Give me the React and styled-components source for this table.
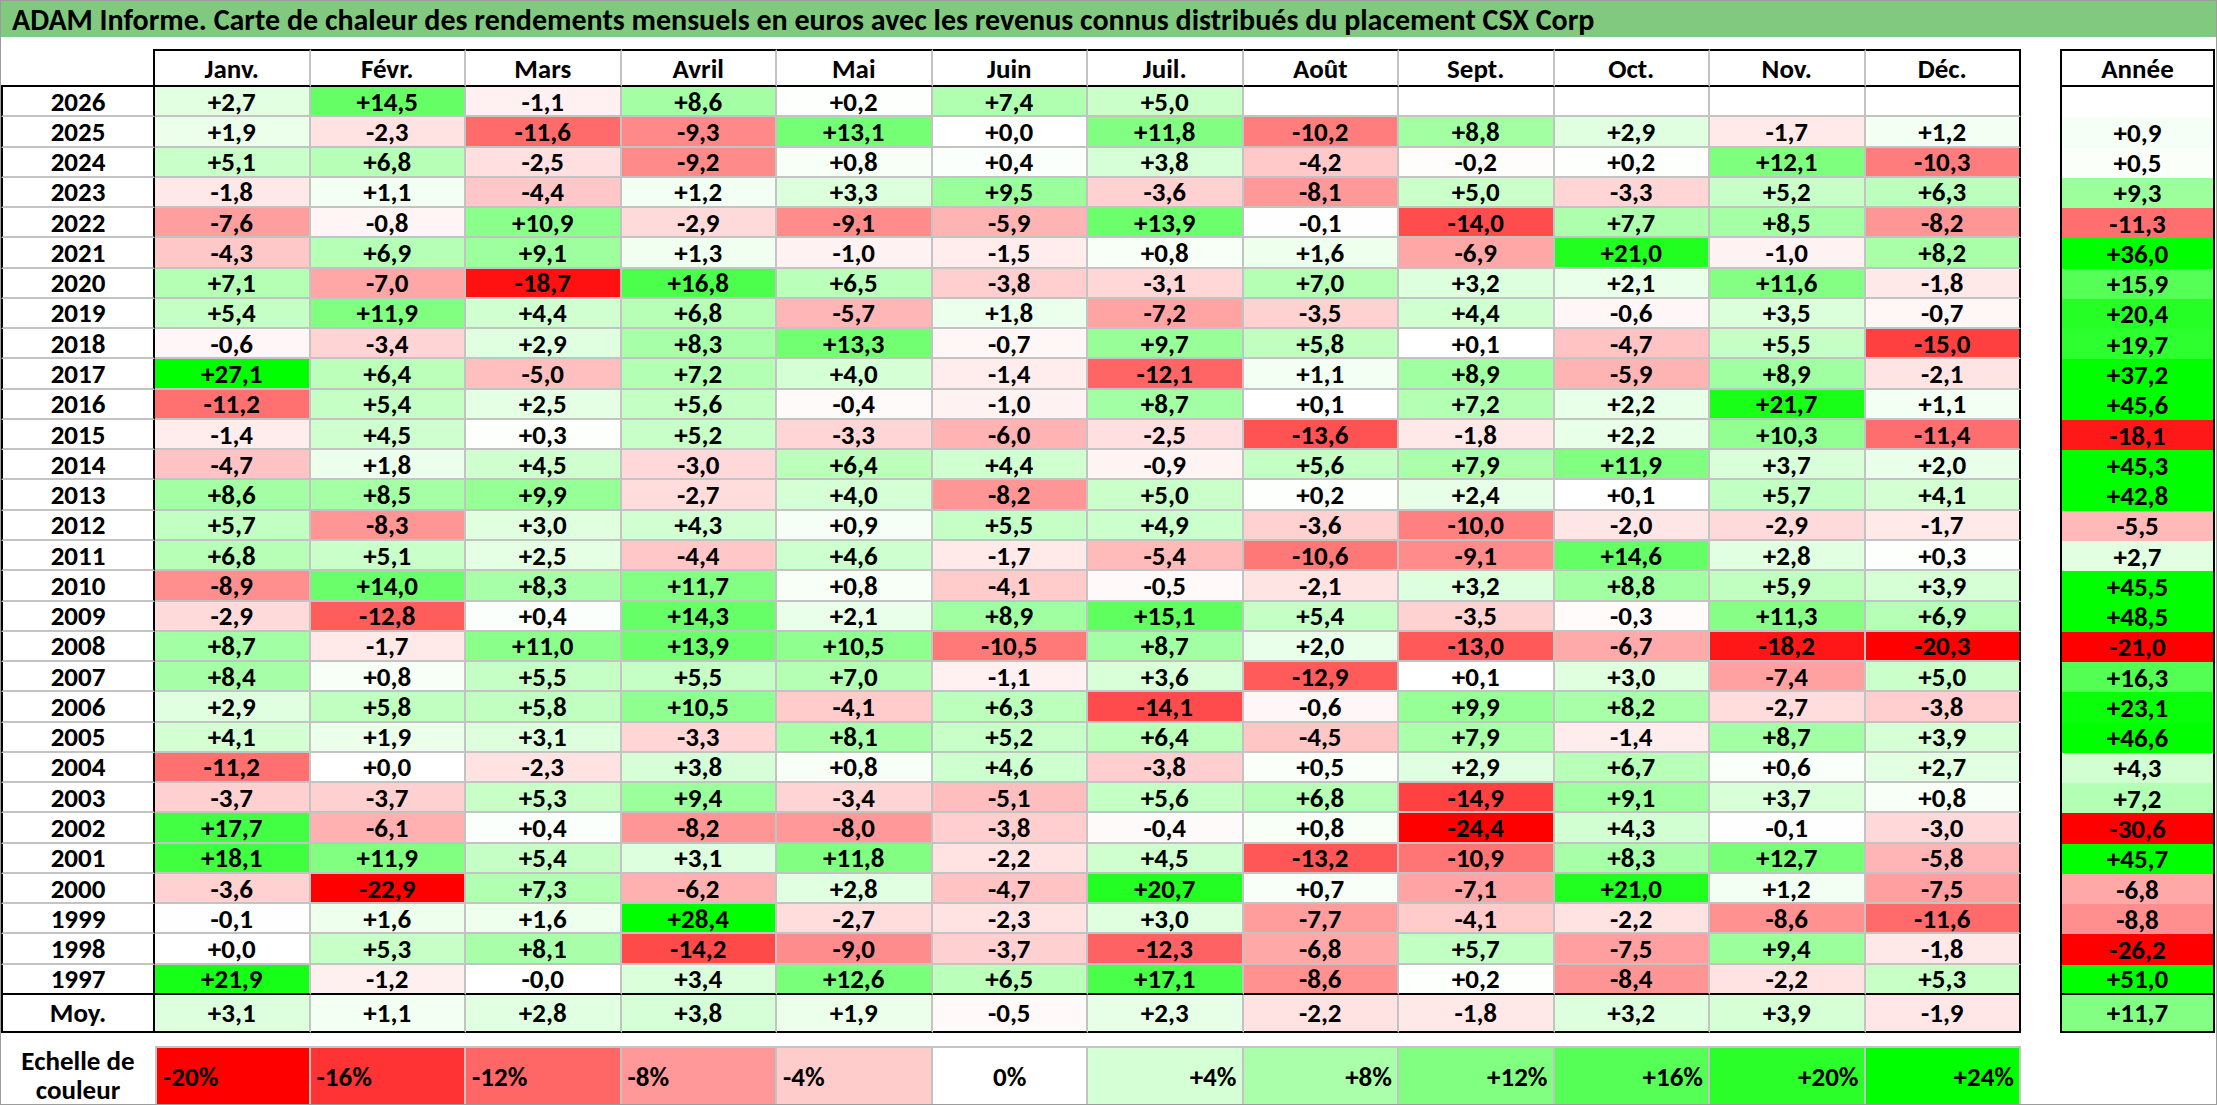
import React from "react";
import styled, { createGlobalStyle } from "styled-components";

const GRID = "#c3c3c3";
const INK = "#000000";

const MONTHS = ["Janv.", "Févr.", "Mars", "Avril", "Mai", "Juin", "Juil.", "Août", "Sept.", "Oct.", "Nov.", "Déc."];

// année | 12 mois | total de l'année
const ROWS = [
  ["2026", "+2,7 +14,5 -1,1 +8,6 +0,2 +7,4 +5,0 . . . . .", ""],
  ["2025", "+1,9 -2,3 -11,6 -9,3 +13,1 +0,0 +11,8 -10,2 +8,8 +2,9 -1,7 +1,2", "+0,9"],
  ["2024", "+5,1 +6,8 -2,5 -9,2 +0,8 +0,4 +3,8 -4,2 -0,2 +0,2 +12,1 -10,3", "+0,5"],
  ["2023", "-1,8 +1,1 -4,4 +1,2 +3,3 +9,5 -3,6 -8,1 +5,0 -3,3 +5,2 +6,3", "+9,3"],
  ["2022", "-7,6 -0,8 +10,9 -2,9 -9,1 -5,9 +13,9 -0,1 -14,0 +7,7 +8,5 -8,2", "-11,3"],
  ["2021", "-4,3 +6,9 +9,1 +1,3 -1,0 -1,5 +0,8 +1,6 -6,9 +21,0 -1,0 +8,2", "+36,0"],
  ["2020", "+7,1 -7,0 -18,7 +16,8 +6,5 -3,8 -3,1 +7,0 +3,2 +2,1 +11,6 -1,8", "+15,9"],
  ["2019", "+5,4 +11,9 +4,4 +6,8 -5,7 +1,8 -7,2 -3,5 +4,4 -0,6 +3,5 -0,7", "+20,4"],
  ["2018", "-0,6 -3,4 +2,9 +8,3 +13,3 -0,7 +9,7 +5,8 +0,1 -4,7 +5,5 -15,0", "+19,7"],
  ["2017", "+27,1 +6,4 -5,0 +7,2 +4,0 -1,4 -12,1 +1,1 +8,9 -5,9 +8,9 -2,1", "+37,2"],
  ["2016", "-11,2 +5,4 +2,5 +5,6 -0,4 -1,0 +8,7 +0,1 +7,2 +2,2 +21,7 +1,1", "+45,6"],
  ["2015", "-1,4 +4,5 +0,3 +5,2 -3,3 -6,0 -2,5 -13,6 -1,8 +2,2 +10,3 -11,4", "-18,1"],
  ["2014", "-4,7 +1,8 +4,5 -3,0 +6,4 +4,4 -0,9 +5,6 +7,9 +11,9 +3,7 +2,0", "+45,3"],
  ["2013", "+8,6 +8,5 +9,9 -2,7 +4,0 -8,2 +5,0 +0,2 +2,4 +0,1 +5,7 +4,1", "+42,8"],
  ["2012", "+5,7 -8,3 +3,0 +4,3 +0,9 +5,5 +4,9 -3,6 -10,0 -2,0 -2,9 -1,7", "-5,5"],
  ["2011", "+6,8 +5,1 +2,5 -4,4 +4,6 -1,7 -5,4 -10,6 -9,1 +14,6 +2,8 +0,3", "+2,7"],
  ["2010", "-8,9 +14,0 +8,3 +11,7 +0,8 -4,1 -0,5 -2,1 +3,2 +8,8 +5,9 +3,9", "+45,5"],
  ["2009", "-2,9 -12,8 +0,4 +14,3 +2,1 +8,9 +15,1 +5,4 -3,5 -0,3 +11,3 +6,9", "+48,5"],
  ["2008", "+8,7 -1,7 +11,0 +13,9 +10,5 -10,5 +8,7 +2,0 -13,0 -6,7 -18,2 -20,3", "-21,0"],
  ["2007", "+8,4 +0,8 +5,5 +5,5 +7,0 -1,1 +3,6 -12,9 +0,1 +3,0 -7,4 +5,0", "+16,3"],
  ["2006", "+2,9 +5,8 +5,8 +10,5 -4,1 +6,3 -14,1 -0,6 +9,9 +8,2 -2,7 -3,8", "+23,1"],
  ["2005", "+4,1 +1,9 +3,1 -3,3 +8,1 +5,2 +6,4 -4,5 +7,9 -1,4 +8,7 +3,9", "+46,6"],
  ["2004", "-11,2 +0,0 -2,3 +3,8 +0,8 +4,6 -3,8 +0,5 +2,9 +6,7 +0,6 +2,7", "+4,3"],
  ["2003", "-3,7 -3,7 +5,3 +9,4 -3,4 -5,1 +5,6 +6,8 -14,9 +9,1 +3,7 +0,8", "+7,2"],
  ["2002", "+17,7 -6,1 +0,4 -8,2 -8,0 -3,8 -0,4 +0,8 -24,4 +4,3 -0,1 -3,0", "-30,6"],
  ["2001", "+18,1 +11,9 +5,4 +3,1 +11,8 -2,2 +4,5 -13,2 -10,9 +8,3 +12,7 -5,8", "+45,7"],
  ["2000", "-3,6 -22,9 +7,3 -6,2 +2,8 -4,7 +20,7 +0,7 -7,1 +21,0 +1,2 -7,5", "-6,8"],
  ["1999", "-0,1 +1,6 +1,6 +28,4 -2,7 -2,3 +3,0 -7,7 -4,1 -2,2 -8,6 -11,6", "-8,8"],
  ["1998", "+0,0 +5,3 +8,1 -14,2 -9,0 -3,7 -12,3 -6,8 +5,7 -7,5 +9,4 -1,8", "-26,2"],
  ["1997", "+21,9 -1,2 -0,0 +3,4 +12,6 +6,5 +17,1 -8,6 +0,2 -8,4 -2,2 +5,3", "+51,0"],
];

const AVERAGE = ["+3,1 +1,1 +2,8 +3,8 +1,9 -0,5 +2,3 -2,2 -1,8 +3,2 +3,9 -1,9", "+11,7"];

const SCALE = [-20, -16, -12, -8, -4, 0, 4, 8, 12, 16, 20, 24];

const heat = (text) => {
  if (!text) return "#ffffff";
  const v = parseFloat(text.replace(",", "."));
  if (v >= 0) {
    const c = Math.round(255 * (1 - Math.min(v / 24, 1)));
    return `rgb(${c},255,${c})`;
  }
  const c = Math.round(255 * (1 - Math.min(-v / 20, 1)));
  return `rgb(255,${c},${c})`;
};

const cells = (line) => line.split(" ").map((s) => (s === "." ? "" : s));

const GlobalStyle = createGlobalStyle`
  html, body {
    margin: 0;
    padding: 0;
    background: #ffffff;
  }
  body {
    font-family: Carlito, Lato, "Liberation Sans", sans-serif;
  }
`;

const Page = styled.div`
  width: 2217px;
  height: 1105px;
  box-sizing: border-box;
  border: 1px solid #9c9c9c;
  background: #ffffff;
  color: ${INK};
  font-weight: 700;
  overflow: hidden;
  display: flex;
  flex-direction: column;
`;

const TitleBar = styled.div`
  height: 36px;
  flex: none;
  background: #80c97f;
  display: flex;
  align-items: center;
  padding-left: 11px;
  font-size: 30px;
  white-space: nowrap;
`;

const Tables = styled.div`
  display: flex;
  gap: 39px;
  margin-top: 12px;
  height: 984px;
  flex: none;
`;

const MonthGrid = styled.div`
  width: 2020px;
  display: grid;
  grid-template-columns: 154px repeat(12, 1fr);
  grid-template-rows: 38px repeat(30, 1fr) 38px;
  font-size: 27px;
`;

const YearGrid = styled.div`
  width: 155px;
  display: grid;
  grid-template-rows: 38px repeat(30, 1fr) 38px;
  font-size: 27px;
`;

const Box = styled.div`
  box-sizing: border-box;
  display: flex;
  align-items: center;
  justify-content: center;
  line-height: 1;
  min-height: 0;
`;

const Corner = styled(Box)`
  border-right: 2px solid ${INK};
  border-bottom: 2px solid ${INK};
`;

const HeadCell = styled(Box)`
  border-top: 2px solid ${INK};
  border-bottom: 2px solid ${INK};
  border-right: 2px solid ${({ $last }) => ($last ? INK : GRID)};
`;

const YearLabel = styled(Box)`
  border-left: 2px solid ${INK};
  border-right: 2px solid ${INK};
  border-bottom: 2px solid ${({ $closing }) => ($closing ? INK : GRID)};
`;

const ValueCell = styled(Box)`
  background: ${({ $bg }) => $bg};
  border-right: 2px solid ${({ $last }) => ($last ? INK : GRID)};
  border-bottom: 2px solid ${({ $closing }) => ($closing ? INK : GRID)};
`;

const AnnualHead = styled(Box)`
  border: 2px solid ${INK};
`;

const AnnualCell = styled(Box)`
  background: ${({ $bg }) => $bg};
  border-left: 2px solid ${INK};
  border-right: 2px solid ${INK};
  border-bottom: ${({ $closing }) => ($closing ? `2px solid ${INK}` : "none")};
`;

const Legend = styled.div`
  width: 2020px;
  height: 58px;
  margin-top: 13px;
  display: grid;
  grid-template-columns: 154px repeat(12, 1fr);
  font-size: 27px;
`;

const LegendLabel = styled.div`
  display: flex;
  align-items: center;
  justify-content: center;
  text-align: center;
  line-height: 29px;
  font-size: 27px;
`;

const Swatch = styled.div`
  box-sizing: border-box;
  display: flex;
  align-items: center;
  padding: 0 5px 0 6px;
  justify-content: ${({ $align }) => $align};
  background: ${({ $bg }) => $bg};
  border-top: 2px solid ${GRID};
  border-right: 2px solid ${GRID};
  border-left: ${({ $first }) => ($first ? `2px solid ${GRID}` : "none")};
`;

const scaleLabel = (v) => (v > 0 ? `+${v}%` : `${v}%`);
const scaleAlign = (v) => (v < 0 ? "flex-start" : v === 0 ? "center" : "flex-end");

export default function App() {
  return (
    <>
      <GlobalStyle />
      <Page>
        <TitleBar>
          ADAM Informe. Carte de chaleur des rendements mensuels en euros avec les revenus connus distribués du placement CSX Corp
        </TitleBar>
        <Tables>
          <MonthGrid>
            <Corner />
            {MONTHS.map((m, i) => (
              <HeadCell key={m} $last={i === 11}>
                {m}
              </HeadCell>
            ))}
            {ROWS.map(([year, line], r) => (
              <React.Fragment key={year}>
                <YearLabel $closing={r === ROWS.length - 1}>{year}</YearLabel>
                {cells(line).map((v, i) => (
                  <ValueCell
                    key={i}
                    $bg={heat(v)}
                    $last={i === 11}
                    $closing={r === ROWS.length - 1}
                  >
                    {v}
                  </ValueCell>
                ))}
              </React.Fragment>
            ))}
            <YearLabel $closing>Moy.</YearLabel>
            {cells(AVERAGE[0]).map((v, i) => (
              <ValueCell key={i} $bg={heat(v)} $last={i === 11} $closing>
                {v}
              </ValueCell>
            ))}
          </MonthGrid>
          <YearGrid>
            <AnnualHead>Année</AnnualHead>
            {ROWS.map(([year, , total], r) => (
              <AnnualCell key={year} $bg={heat(total)} $closing={r === ROWS.length - 1}>
                {total}
              </AnnualCell>
            ))}
            <AnnualCell $bg={heat(AVERAGE[1])} $closing>
              {AVERAGE[1]}
            </AnnualCell>
          </YearGrid>
        </Tables>
        <Legend>
          <LegendLabel>
            Echelle de
            <br />
            couleur
          </LegendLabel>
          {SCALE.map((v, i) => (
            <Swatch key={v} $bg={heat(String(v))} $align={scaleAlign(v)} $first={i === 0}>
              {scaleLabel(v)}
            </Swatch>
          ))}
        </Legend>
      </Page>
    </>
  );
}
